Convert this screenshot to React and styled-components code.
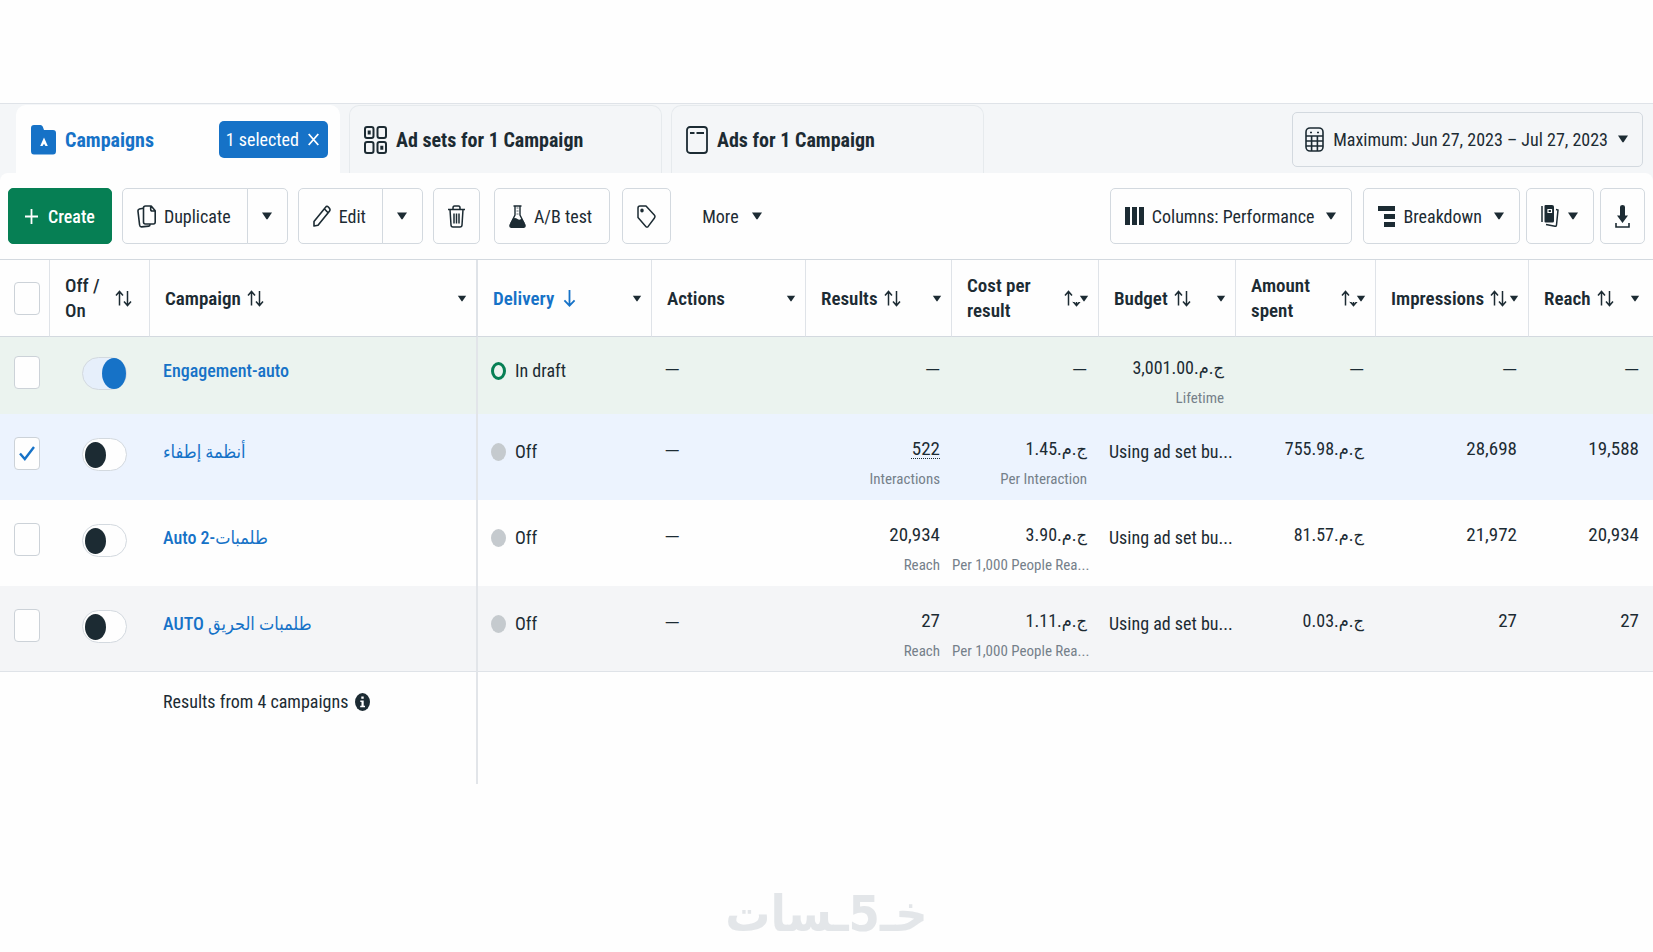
import React, {useState} from 'react';
import styled, {createGlobalStyle} from "styled-components";

const colors = {
    text: "#1c2b33",
    muted: "#75808a",
    blue: "#1672c7",
    green: "#067f54",
    border: "#d3d9df",
    line: "#dfe3e8",
    strip: "#f4f6f8",
}

const GlobalStyle = createGlobalStyle`
*{
    box-sizing: border-box;
}

body{
    margin: 0;
    background: #fefefe;
    color: ${colors.text};
    font-family: "Roboto Condensed", "DejaVu Sans Condensed", Roboto, sans-serif;
    font-size: 18px;
}

button, input{
    font: inherit;
    color: inherit;
    margin: 0;
}

svg{
    display: block;
    flex: none;
}
`

const Page = styled.main`
display: flex;
flex-direction: column;
padding-top: 103px;
`
const TabStrip = styled.div`
display: flex;
align-items: flex-end;
justify-content: space-between;
padding: 1px 10px 0 16px;
border-top: 1px solid ${colors.line};
background: ${colors.strip};
`
const Tabs = styled.nav`
display: flex;
gap: 9px;
`
const Tab = styled.div`
display: flex;
align-items: center;
justify-content: space-between;
width: ${({active}) => active ? "324px" : "313px"};
height: 68px;
padding: 0 11px 0 14px;
border: 1px solid ${({active}) => active ? "#fefefe" : "#e6eaed"};
border-bottom: 0;
border-radius: 10px 10px 0 0;
background: ${({active}) => active ? "#fefefe" : colors.strip};
`
const TabLink = styled.a`
display: flex;
align-items: center;
gap: 9px;
color: ${({active}) => active ? colors.blue : colors.text};
font-size: 20px;
font-weight: 700;
text-decoration: none;
`
const SelectedBadge = styled.button`
display: flex;
align-items: center;
gap: 9px;
height: 37px;
padding: 0 9px 0 7px;
border: 0;
border-radius: 5px;
background: ${colors.blue};
color: #fff;
cursor: pointer;
`
const DateButton = styled.button`
display: flex;
align-items: center;
align-self: center;
gap: 9px;
height: 55px;
padding: 0 13px 0 12px;
border: 1px solid ${colors.border};
border-radius: 5px;
background: ${colors.strip};
cursor: pointer;
`
const ToolbarWrap = styled.div`
background: ${colors.strip};
`
const Toolbar = styled.div`
display: flex;
justify-content: space-between;
padding: 15px 8px;
border-radius: 8px 8px 0 0;
background: #fefefe;
`
const ToolGroup = styled.div`
display: flex;
gap: ${({gap}) => gap}px;
`
const ToolButton = styled.button`
display: flex;
align-items: center;
justify-content: center;
gap: 8px;
height: 56px;
min-width: 45px;
padding: 0 14px;
border: 1px solid ${colors.border};
border-radius: 5px;
background: #fefefe;
white-space: nowrap;
cursor: pointer;

    &:hover{
        background: #f4f6f8;
    }
`
const CreateButton = styled(ToolButton)`
gap: 10px;
padding: 0 16px;
border-color: ${colors.green};
background: ${colors.green};
color: #fff;
font-weight: 500;

    &:hover{
        background: #056b47;
    }
`
const PlainButton = styled(ToolButton)`
gap: 12px;
padding: 0 18px;
border-color: transparent;
`
const SplitButton = styled.div`
display: flex;

    ${ToolButton}:first-child{
        padding-right: 16px;
        border-radius: 5px 0 0 5px;
    }

    ${ToolButton}:last-child{
        width: 41px;
        min-width: 0;
        margin-left: -1px;
        padding: 0;
        border-radius: 0 5px 5px 0;
    }
`
const MenuLabel = styled.span`
margin-right: 3px;
`
const Table = styled.table`
width: 100%;
table-layout: fixed;
border-collapse: separate;
border-spacing: 0;
border-top: 1px solid ${colors.border};
`
const HeadCell = styled.th`
position: relative;
height: 77px;
padding: 0 17px 0 15px;
border-right: 1px solid ${colors.line};
border-bottom: 1px solid ${colors.border};
color: ${({sorted}) => sorted ? colors.blue : colors.text};
font-size: 19px;
font-weight: 500;
line-height: 25px;
text-align: left;

    &:first-child{
        padding: 0 0 0 14px;
    }

    &:nth-child(3){
        border-right-width: 2px;
    }

    &:last-child{
        border-right: 0;
    }
`
const HeadContent = styled.div`
display: flex;
align-items: center;
gap: 6px;
font-weight: ${({bold}) => bold ? 600 : 500};
`
const HeadMenu = styled.button`
position: absolute;
right: 9px;
bottom: 34px;
padding: ${({tight}) => tight ? "12px 0 0 6px" : "0"};
border: 0;
background: #fefefe;
color: ${colors.text};
cursor: pointer;

    ${HeadCell}:last-child &{
        right: 14px;
    }
`
const Row = styled.tr`
height: ${({tone}) => tone === "draft" ? 77 : 86}px;
background: ${({tone}) => ({draft: "#ebf3ef", selected: "#ecf3fe", striped: "#f4f5f7"})[tone] || "#fefefe"};

    td{
        padding-top: ${({tone}) => tone === "draft" ? 16 : 20}px;
    }

    &:nth-child(4) td{
        border-bottom: 1px solid ${colors.line};
    }
`
const Cell = styled.td`
padding: 0 12px 0 0;
line-height: 30px;
text-align: right;
vertical-align: top;
white-space: nowrap;

    &:last-child{
        padding-right: 15px;
    }
`
const CountCell = styled(Cell)`
font-size: 19px;
`
const ActionsCell = styled(Cell)`
padding-left: 13px;
text-align: left;
`
const LeftCell = styled(Cell)`
padding-left: ${({inset}) => inset}px;
line-height: 36px;
text-align: left;
`
const NameCell = styled(LeftCell)`
border-right: 2px solid #e2e5e9;
font-weight: 500;

    a{
        color: ${colors.blue};
        text-decoration: none;
    }

    a:hover{
        text-decoration: underline;
    }
`
const Note = styled.div`
color: ${colors.muted};
font-size: 15px;
line-height: 30px;
`
const LinkedValue = styled.span`
text-decoration: underline;
text-decoration-style: dotted;
text-decoration-thickness: 1px;
text-underline-offset: 3px;
`
const Dash = styled.span`
font-family: "DejaVu Sans Condensed", sans-serif;
font-size: 16px;
`
const Status = styled.div`
display: flex;
align-items: center;
gap: 9px;
`
const StatusDot = styled.span`
width: 15px;
height: 18px;
border: ${({draft}) => draft ? `3px solid ${colors.green}` : "0"};
border-radius: 50%;
background: ${({draft}) => draft ? "transparent" : "#c5cace"};
`
const CheckLabel = styled.label`
display: block;
position: relative;
width: 26px;
height: 33px;
margin-top: 3px;

    svg{
        position: absolute;
        top: 9px;
        left: 5px;
        pointer-events: none;
    }
`
const HeadCheckLabel = styled(CheckLabel)`
margin-top: 0;
`
const CheckInput = styled.input`
display: block;
appearance: none;
width: 100%;
height: 100%;
border: 1px solid #ccd2d8;
border-radius: 4px;
background: #fefefe;
cursor: pointer;
`
const Switch = styled.input`
display: flex;
align-items: center;
appearance: none;
width: 45px;
height: 33px;
margin-top: 4px;
border: 1px solid ${colors.border};
border-radius: 17px;
background: #fefefe;
cursor: pointer;

    &::before{
        content: "";
        width: 21px;
        height: 26px;
        margin-left: 2px;
        border-radius: 50%;
        background: ${colors.text};
    }

    &:checked{
        justify-content: flex-end;
        background: #e6effb;
    }

    &:checked::before{
        width: 24px;
        height: 31px;
        background: ${colors.blue};
    }
`
const FooterRow = styled.tr`
height: 112px;

    td{
        padding-top: 12px;
    }
`
const Summary = styled.div`
display: flex;
align-items: center;
gap: 7px;
font-weight: 400;
`
const Watermark = styled.footer`
margin-top: 100px;
color: #e3e6e9;
font-family: "DejaVu Sans Condensed", "DejaVu Sans", sans-serif;
font-size: 50px;
font-weight: 700;
line-height: 60px;
text-align: center;
`

const Caret = ({small}) => (
    <svg width={small ? 10 : 12} height={small ? 7 : 8} viewBox="0 0 12 8">
        <path d="M1 .6h10L6.700 7q-.7.9-1.400 0z" fill="currentColor"/>
    </svg>
)

const SortIcon = () => (
    <svg width="17" height="17" viewBox="0 0 17 17" fill="none" stroke="currentColor" strokeWidth="1.500">
        <path d="M4.500 15.500V1.500M1 5.400l3.500-4L8 5.400M12.500 1v14.500M9 11.500l3.500 4 3.500-4"/>
    </svg>
)

const SortedIcon = () => (
    <svg width="17" height="17" viewBox="0 0 17 17" fill="none" stroke="currentColor" strokeWidth="1.800">
        <path d="M9.500 0v15.500M4.400 10.400l5.100 5.200 5.100-5.200"/>
    </svg>
)

const FolderIcon = () => (
    <svg width="25" height="30" viewBox="0 0 25 30">
        <path d="M0 3q0-3 3-3h6.500q1.500 0 2.200 1.500L13 5h9q3 0 3 3v18q0 3.500-3 3.500H3q-3 0-3-3.500z" fill={colors.blue}/>
        <path d="m13 12.500 3.800 8.500h-2.300L13 18.800 11.500 21H9.200z" fill="#fff"/>
    </svg>
)

const GridIcon = () => (
    <svg width="23" height="28" viewBox="0 0 23 28" fill="none" stroke="currentColor" strokeWidth="2">
        <rect x="1" y="1" width="8.500" height="11" rx="2"/>
        <rect x="13.500" y="1" width="8.500" height="11" rx="2"/>
        <rect x="1" y="16" width="8.500" height="11" rx="2"/>
        <rect x="13.500" y="16" width="8.500" height="11" rx="2"/>
        <path d="M3.700 4.500h3v4h-3zM16.300 19.800h3v4h-3z" fill="currentColor" stroke="none"/>
    </svg>
)

const AdIcon = () => (
    <svg width="22" height="28" viewBox="0 0 22 28" fill="none" stroke="currentColor" strokeWidth="1.800">
        <rect x="1" y="1" width="20" height="26" rx="3"/>
        <path d="M4 7h4.500M10.500 7h7.500"/>
    </svg>
)

const CloseIcon = () => (
    <svg width="11" height="13" viewBox="0 0 11 13" stroke="currentColor" strokeWidth="1.800">
        <path d="m.7 1 9.600 11M10.300 1 .7 12"/>
    </svg>
)

const CalendarIcon = () => (
    <svg width="19" height="25" viewBox="0 0 19 25" fill="none" stroke="currentColor" strokeWidth="1.600">
        <rect x="1" y="1" width="17" height="23" rx="4"/>
        <path d="M1 9h17M1 14h17M1 19h17M6.600 9v15M12.400 9v15M5 5.500h2M12 5.500h2"/>
    </svg>
)

const PlusIcon = () => (
    <svg width="13" height="15" viewBox="0 0 13 15" stroke="currentColor" strokeWidth="1.800">
        <path d="M6.500 0v15M0 7.500h13"/>
    </svg>
)

const DuplicateIcon = () => (
    <svg width="19" height="23" viewBox="0 0 19 23" fill="none" stroke="currentColor" strokeWidth="1.600" strokeLinejoin="round">
        <path d="M8.500 1h5.700l4 4.700V17q0 2-1.800 2H8.300q-1.800 0-1.800-2V3q0-2 2-2zM13.700 1.200v3q0 1.800 1.600 1.800h2.700"/>
        <path d="M6.300 3.300 2.400 4Q.7 4.400 1 6.400L2.600 20q.3 2 2 1.900l7.200-.8q1.200-.1 1.300-2"/>
    </svg>
)

const PencilIcon = () => (
    <svg width="18" height="22" viewBox="0 0 18 22" fill="none" stroke="currentColor" strokeWidth="1.600" strokeLinejoin="round">
        <path d="M1 21v-4.500L12.600 2.200q1.300-1.700 2.700-.2l1.100 1.300q1.200 1.500 0 3L5 20.300zM11.300 3.800l4 4.200"/>
    </svg>
)

const TrashIcon = () => (
    <svg width="17" height="23" viewBox="0 0 17 23" fill="none" stroke="currentColor" strokeWidth="1.500">
        <path d="M0 4.500h17M5 4.500V3q0-2 1.500-2h4Q12 1 12 3v1.500M2 4.500l1 15.500q.1 2 2 2h7q1.900 0 2-2l1-15.500M6 8.500v10M8.500 8.500v10M11 8.500v10"/>
    </svg>
)

const FlaskIcon = () => (
    <svg width="17" height="23" viewBox="0 0 17 23">
        <path d="M4.500 1h8M6 1v9L1.800 18.500M11 1v9l4.200 8.500" fill="none" stroke="currentColor" strokeWidth="1.400"/>
        <path d="M4 13.500q2.300-1 4.500.5t4.500-.5l3.500 6q1 3-1.500 3.500H2Q-.5 22.500.5 19.500z" fill="currentColor"/>
        <path d="M7.500 3h2M7.500 6h2M7.500 9h2" stroke="currentColor" strokeWidth=".7"/>
    </svg>
)

const TagIcon = () => (
    <svg width="19" height="23" viewBox="0 0 19 23" fill="none" stroke="currentColor" strokeWidth="1.500" strokeLinejoin="round">
        <path d="M1 3q0-2 2-2h6l8.300 9q1.300 1.500 0 3.200l-6.100 8.200q-1.200 1.300-2.400 0L1 12.500z"/>
        <ellipse cx="5" cy="5.500" rx="1" ry="1.300" fill="currentColor"/>
    </svg>
)

const ColumnsIcon = () => (
    <svg width="19" height="18" viewBox="0 0 19 18" fill="currentColor">
        <path d="M0 0h5v18H0zM7 0h5v18H7zM14 0h5v18h-5z"/>
    </svg>
)

const BreakdownIcon = () => (
    <svg width="17" height="21" viewBox="0 0 17 21" fill="currentColor">
        <path d="M0 0h17v5H0zM6 8h11v5H6zM6 16h11v5H6z"/>
    </svg>
)

const ReportsIcon = () => (
    <svg width="18" height="22" viewBox="0 0 18 22" fill="none" stroke="currentColor" strokeWidth="1.500">
        <path d="M1 1v16M15 4.500l2 .5-1.500 15q-.2 1.500-1.500 1.200L5 19.500"/>
        <path d="M4.500 0H11q2 0 2 2v14q0 1.500-1.500 1.500h-7q-1 0-1-1v-15.500q0-1 1-1z" fill="currentColor" stroke="none"/>
        <path d="M7 4.500h3.500v3H7z" stroke="#fefefe" strokeWidth="1.200"/>
    </svg>
)

const DownloadIcon = () => (
    <svg width="15" height="23" viewBox="0 0 15 23">
        <path d="M5 2q0-2 2.500-2T10 2v8.500h3L7.500 18 2 10.500h3z" fill="currentColor"/>
        <path d="M1 18v4h13v-4" fill="none" stroke="currentColor" strokeWidth="1.600"/>
    </svg>
)

const InfoIcon = () => (
    <svg width="15" height="18" viewBox="0 0 15 18">
        <ellipse cx="7.500" cy="9" rx="7.500" ry="9" fill="currentColor"/>
        <path d="M6.300 3.500h2.400v2.300H6.300zM5.300 7.500h3.400v5.300h1.300v1.400H5.200v-1.400h1.300V9H5.300z" fill="#fff"/>
    </svg>
)

const columns = [
    {label: "Off / On", width: 100, sortable: true},
    {label: "Campaign", width: 328, sortable: true, menu: true},
    {label: "Delivery", width: 174, sorted: true, menu: true},
    {label: "Actions", width: 154, menu: true},
    {label: "Results", width: 146, sortable: true, menu: true},
    {label: "Cost per result", width: 147, sortable: true, menu: true, tight: true},
    {label: "Budget", width: 137, sortable: true, menu: true},
    {label: "Amount spent", width: 140, sortable: true, menu: true, tight: true},
    {label: "Impressions", width: 153, sortable: true, menu: true},
    {label: "Reach", width: 125, sortable: true, menu: true},
]

const campaigns = [
    {
        id: 1, name: "Engagement-auto", tone: "draft", on: true, delivery: "In draft",
        budget: ["3,001.00.ج.م", "Lifetime"],
    },
    {
        id: 2, name: "أنظمة إطفاء", tone: "selected", delivery: "Off", linked: true,
        results: ["522", "Interactions"], cost: ["1.45.ج.م", "Per Interaction"],
        spent: "755.98.ج.م", impressions: "28,698", reach: "19,588",
    },
    {
        id: 3, name: "Auto 2-طلمبات", tone: "plain", delivery: "Off",
        results: ["20,934", "Reach"], cost: ["3.90.ج.م", "Per 1,000 People Rea..."],
        spent: "81.57.ج.م", impressions: "21,972", reach: "20,934",
    },
    {
        id: 4, name: "AUTO طلمبات الحريق", tone: "striped", delivery: "Off",
        results: ["27", "Reach"], cost: ["1.11.ج.م", "Per 1,000 People Rea..."],
        spent: "0.03.ج.م", impressions: "27", reach: "27",
    },
]

const Checkbox = ({label, checked, onChange}) => (
    <>
        <CheckInput type="checkbox" aria-label={label} checked={checked} onChange={onChange}/>
        {checked ? (
            <svg width="16" height="15" viewBox="0 0 16 15" fill="none" stroke={colors.blue} strokeWidth="2.400">
                <path d="m1 7.500 4.800 5.500L15 1"/>
            </svg>
        ) : null}
    </>
)

const Value = ({value, linked}) => {
    if (!value) return <Dash>—</Dash>
    return linked ? <LinkedValue>{value}</LinkedValue> : value
}

const CampaignRow = ({campaign, checked, onCheck}) => {
    const [on, setOn] = useState(Boolean(campaign.on))
    const {name, tone, delivery, results = [], cost = [], budget, spent, impressions, reach, linked} = campaign

    return (
        <Row tone={tone}>
            <LeftCell inset={14}>
                <CheckLabel>
                    <Checkbox label={`Select ${name}`} checked={checked} onChange={onCheck}/>
                </CheckLabel>
            </LeftCell>
            <LeftCell inset={32}>
                <Switch type="checkbox" role="switch" aria-label={`Turn on ${name}`} checked={on} onChange={() => setOn(!on)}/>
            </LeftCell>
            <NameCell inset={13}><a href="#campaign">{name}</a></NameCell>
            <LeftCell inset={13}>
                <Status><StatusDot draft={delivery === "In draft"}/>{delivery}</Status>
            </LeftCell>
            <ActionsCell><Value/></ActionsCell>
            <CountCell>
                <Value value={results[0]} linked={linked}/>
                {results[1] ? <Note>{results[1]}</Note> : null}
            </CountCell>
            <Cell>
                <Value value={cost[0]}/>
                {cost[1] ? <Note>{cost[1]}</Note> : null}
            </Cell>
            {budget ? (
                <Cell>
                    <Value value={budget[0]}/>
                    <Note>{budget[1]}</Note>
                </Cell>
            ) : <LeftCell inset={10}>Using ad set bu...</LeftCell>}
            <Cell><Value value={spent}/></Cell>
            <CountCell><Value value={impressions}/></CountCell>
            <CountCell><Value value={reach}/></CountCell>
        </Row>
    )
}

const App = () => {
    const [selected, setSelected] = useState([2])

    const toggleSelected = (id) => {
        setSelected(selected.includes(id) ? selected.filter(s => s !== id) : [...selected, id])
    }

    const toggleAll = () => {
        setSelected(selected.length === campaigns.length ? [] : campaigns.map(c => c.id))
    }

    return (
        <Page>
            <GlobalStyle/>
            <TabStrip>
                <Tabs>
                    <Tab active>
                        <TabLink href="#campaigns" active><FolderIcon/>Campaigns</TabLink>
                        {selected.length ? (
                            <SelectedBadge onClick={() => setSelected([])}>
                                {`${selected.length} selected`}<CloseIcon/>
                            </SelectedBadge>
                        ) : null}
                    </Tab>
                    <Tab><TabLink href="#adsets"><GridIcon/>Ad sets for 1 Campaign</TabLink></Tab>
                    <Tab><TabLink href="#ads"><AdIcon/>Ads for 1 Campaign</TabLink></Tab>
                </Tabs>
                <DateButton><CalendarIcon/>Maximum: Jun 27, 2023 – Jul 27, 2023<Caret/></DateButton>
            </TabStrip>

            <ToolbarWrap>
                <Toolbar>
                    <ToolGroup gap={14}>
                        <ToolGroup gap={10}>
                            <CreateButton><PlusIcon/>Create</CreateButton>
                            <SplitButton>
                                <ToolButton><DuplicateIcon/>Duplicate</ToolButton>
                                <ToolButton aria-label="Duplicate options"><Caret/></ToolButton>
                            </SplitButton>
                            <SplitButton>
                                <ToolButton><PencilIcon/>Edit</ToolButton>
                                <ToolButton aria-label="Edit options"><Caret/></ToolButton>
                            </SplitButton>
                            <ToolButton aria-label="Delete"><TrashIcon/></ToolButton>
                        </ToolGroup>
                        <ToolGroup gap={12}>
                            <ToolButton><FlaskIcon/><MenuLabel>A/B test</MenuLabel></ToolButton>
                            <ToolButton aria-label="Tag"><TagIcon/></ToolButton>
                            <PlainButton>More<Caret/></PlainButton>
                        </ToolGroup>
                    </ToolGroup>
                    <ToolGroup gap={11}>
                        <ToolButton><ColumnsIcon/><MenuLabel>Columns: Performance</MenuLabel><Caret/></ToolButton>
                        <ToolGroup gap={6}>
                            <ToolButton><BreakdownIcon/><MenuLabel>Breakdown</MenuLabel><Caret/></ToolButton>
                            <ToolButton aria-label="Reports"><ReportsIcon/><Caret/></ToolButton>
                            <ToolButton aria-label="Download"><DownloadIcon/></ToolButton>
                        </ToolGroup>
                    </ToolGroup>
                </Toolbar>
            </ToolbarWrap>

            <Table>
                <colgroup>
                    <col width="50"/>
                    {columns.map(c => <col key={c.label} width={c.width}/>)}
                </colgroup>
                <thead>
                    <tr>
                        <HeadCell>
                            <HeadCheckLabel>
                                <Checkbox label="Select all" checked={selected.length === campaigns.length} onChange={toggleAll}/>
                            </HeadCheckLabel>
                        </HeadCell>
                        {columns.map(c => (
                            <HeadCell key={c.label} sorted={c.sorted}>
                                <HeadContent bold={c.menu}>
                                    {c.label}
                                    {c.sortable ? <SortIcon/> : null}
                                    {c.sorted ? <SortedIcon/> : null}
                                </HeadContent>
                                {c.menu ? <HeadMenu tight={c.tight} aria-label={`${c.label} menu`}><Caret small/></HeadMenu> : null}
                            </HeadCell>
                        ))}
                    </tr>
                </thead>
                <tbody>
                    {campaigns.map(c => (
                        <CampaignRow
                            key={c.id}
                            campaign={c}
                            checked={selected.includes(c.id)}
                            onCheck={() => toggleSelected(c.id)}
                        />
                    ))}
                    <FooterRow>
                        <LeftCell colSpan={2}/>
                        <NameCell inset={13}>
                            <Summary>Results from 4 campaigns<InfoIcon/></Summary>
                        </NameCell>
                        <LeftCell colSpan={8}/>
                    </FooterRow>
                </tbody>
            </Table>

            <Watermark dir="rtl">خـ5ـسات</Watermark>
        </Page>
    );
};

export default App;
